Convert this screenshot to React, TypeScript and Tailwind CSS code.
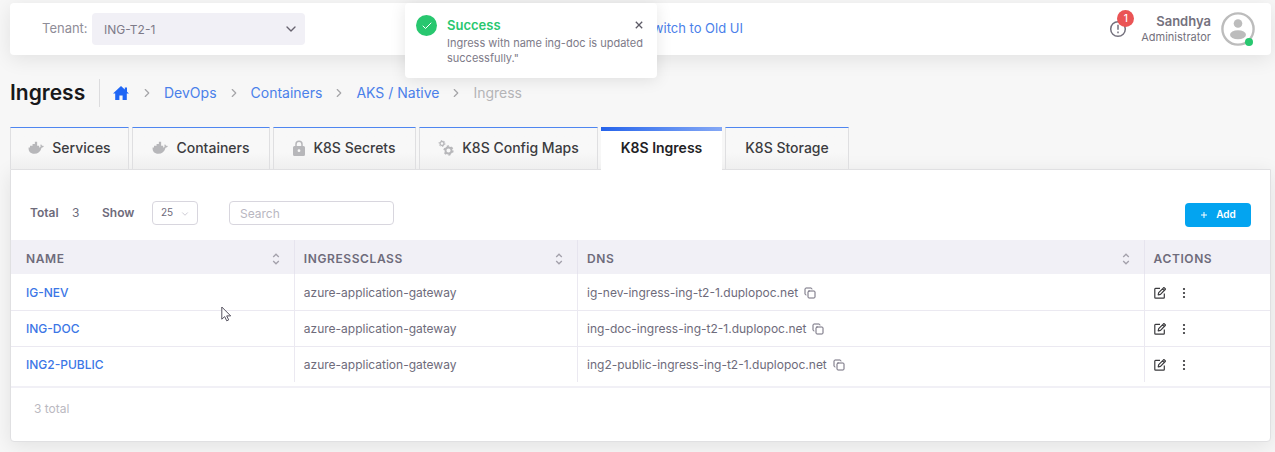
import type { ReactNode } from "react";
import { Check, ChevronDown, ChevronRight, Copy } from "lucide-react";

function Home() {
  return (
    <svg viewBox="0 0 18 16" className="h-4 w-[18px]" fill="#1f66f5" aria-hidden="true">
      <path d="M9 1 1 8.600h2.200V15h4.200v-4.600h3.200V15h4.200V8.600H17l-2-1.900V2.500h-2.200v2.100Z" />
    </svg>
  );
}

function Whale() {
  return (
    <svg viewBox="0 0 28 24" className="h-3.5 w-4 shrink-0 text-[#b7b7ba]" fill="currentColor" aria-hidden="true">
      <path d="M1 11h2.500V8H8V5h4V1h4v7h3.500v3h1c1-.3 1.600-.9 1.600-1.700-.7-1.300-.5-2.800.4-4 1.300.8 2 1.800 2.100 3 1.300-.1 2.300.1 3.100.8-.7 1.600-2.100 2.300-4 2.300C21.800 18.500 17.500 22 11 22 4.500 22 .6 18 1 11Z" />
    </svg>
  );
}

function Lock() {
  return (
    <svg viewBox="0 0 12 16" className="h-4 w-3 shrink-0" aria-hidden="true">
      <path d="M3 7V4.200a3 3 0 0 1 6 0V7" fill="none" stroke="#b7b7ba" strokeWidth="1.500" />
      <path fillRule="evenodd" d="M1.500 6h9A1.500 1.500 0 0 1 12 7.500v7a1.500 1.500 0 0 1-1.500 1.500h-9A1.500 1.500 0 0 1 0 14.500v-7A1.500 1.500 0 0 1 1.500 6ZM6 9.300a1.400 1.400 0 1 0 0 2.800 1.400 1.400 0 0 0 0-2.800Z" fill="#b7b7ba" />
    </svg>
  );
}

function Gears() {
  return (
    <svg viewBox="0 0 16 18" className="h-[18px] w-4 shrink-0" fill="none" stroke="#b7b7ba" aria-hidden="true">
      <circle cx="4" cy="4.500" r="2" strokeWidth="1.300" />
      <circle cx="4" cy="4.500" r="3" strokeWidth="1" strokeDasharray="1.300 1.840" />
      <circle cx="10.500" cy="11.500" r="3" strokeWidth="1.900" />
      <circle cx="10.500" cy="11.500" r="4.400" strokeWidth="1.500" strokeDasharray="2.200 2.407" />
    </svg>
  );
}

function SortArrows() {
  return (
    <svg viewBox="0 0 8 12" className="h-3 w-2" fill="none" stroke="#a3a0ab" strokeWidth="1.300" aria-hidden="true">
      <path d="M1.200 4 4 1.200 6.800 4M1.200 8 4 10.800 6.800 8" />
    </svg>
  );
}

function EditIcon() {
  return (
    <svg viewBox="0 0 12 12" className="h-3 w-3" fill="none" stroke="#3a3a3d" strokeWidth="1.200" strokeLinejoin="round" aria-hidden="true">
      <path d="M6 1.400H1.500a.7.7 0 0 0-.7.7v8.400c0 .4.300.7.700.7h8.100c.4 0 .7-.3.700-.7V6.500" />
      <path d="m4.200 7.900.5-2.300L9.500.8a.6.6 0 0 1 .8 0l.9.9a.6.6 0 0 1 0 .8L6.500 7.300ZM8.500 1.900l1.600 1.600" />
    </svg>
  );
}

const tabs: { label: string; width: string; icon?: ReactNode }[] = [
  { label: "Services", width: "w-[119px]", icon: <Whale /> },
  { label: "Containers", width: "w-[138px]", icon: <Whale /> },
  { label: "K8S Secrets", width: "w-[143px]", icon: <Lock /> },
  { label: "K8S Config Maps", width: "w-[179px]", icon: <Gears /> },
  { label: "K8S Ingress", width: "w-[121px]" },
  { label: "K8S Storage", width: "w-[124px]" },
];

const rows = [
  { name: "IG-NEV", dns: "ig-nev-ingress-ing-t2-1.duplopoc.net" },
  { name: "ING-DOC", dns: "ing-doc-ingress-ing-t2-1.duplopoc.net" },
  { name: "ING2-PUBLIC", dns: "ing2-public-ingress-ing-t2-1.duplopoc.net" },
];

const columns = [
  { label: "NAME", width: "w-[22.5%]", pad: "pl-[15px]", sortable: true },
  { label: "INGRESSCLASS", width: "w-[22.5%]", pad: "pl-[9px]", sortable: true },
  { label: "DNS", width: "w-[45%]", pad: "pl-[9px]", sortable: true },
  { label: "ACTIONS", width: "w-[10%]", pad: "pl-[9px]", sortable: false },
];

function Header() {
  return (
    <header className="flex h-[52px] items-center rounded bg-white shadow-[0_4px_20px_rgba(0,0,0,0.09)]">
      <div className="flex w-1/2 items-center pl-8">
        <label htmlFor="tenant" className="w-[50px] text-[13px] text-[#8f8d98]">Tenant:</label>
        <div className="relative">
          <select id="tenant" className="h-8 w-[213px] appearance-none rounded bg-[#f1f0f6] pt-0.5 pl-3 text-xs text-[#7d7a88]">
            <option>ING-T2-1</option>
          </select>
          <ChevronDown className="pointer-events-none absolute top-2 right-1.5 size-4 text-[#67636f]" />
        </div>
      </div>
      <a href="#old-ui" className="pl-1 text-[13px] text-[#4a80ea]">Switch to Old UI</a>
      <div className="ml-auto flex items-center pr-4">
        <button aria-label="Notifications" className="relative mr-3.5">
          <svg viewBox="0 0 18 18" className="size-[18px]" fill="none" stroke="#74717d" strokeWidth="1.500">
            <circle cx="9" cy="9" r="7.300" />
            <path d="M9 4.800v5M9 11.600v1.600" />
          </svg>
          <span className="absolute -top-2.5 left-2 flex size-[17px] items-center justify-center rounded-full bg-[#ea5455] text-[10px] font-medium text-white">1</span>
        </button>
        <div className="mr-2.5 text-right text-[#74717d]">
          <div className="text-[13px] leading-4 font-semibold">Sandhya</div>
          <div className="text-[11px] leading-4">Administrator</div>
        </div>
        <div className="relative">
          <svg viewBox="0 0 34 34" className="size-[34px]" fill="#bcbcbc" role="img" aria-label="Sandhya">
            <circle cx="17" cy="17" r="15.600" fill="none" stroke="#bcbcbc" strokeWidth="2.400" />
            <circle cx="17" cy="11.500" r="4.300" />
            <ellipse cx="17" cy="22.800" rx="8" ry="4.500" />
          </svg>
          <span className="absolute right-0.5 bottom-0 size-2 rounded-full bg-[#28c76f]" />
        </div>
      </div>
    </header>
  );
}

function Toast() {
  return (
    <div role="status" className="absolute top-[3px] left-[405px] z-10 flex h-[75px] w-[252px] rounded bg-white pt-3 pl-[11px] shadow-[0_2px_16px_rgba(0,0,0,0.1)]">
      <span className="flex size-[21px] shrink-0 items-center justify-center rounded-full bg-[#28c76f]">
        <Check className="size-3 text-white" strokeWidth={2} />
      </span>
      <div className="ml-2.5">
        <div className="text-[13px] leading-5 font-semibold text-[#28c76f]">Success</div>
        <p className="mt-px w-[200px] text-[11px] leading-[15px] text-[#7d7a88]">Ingress with name ing-doc is updated successfully."</p>
      </div>
      <button aria-label="Close" className="absolute top-[18px] right-3.5">
        <svg viewBox="0 0 8 8" className="size-2" stroke="#5d5b66" strokeWidth="1.300"><path d="m.8.8 6.400 6.400M7.200.8.8 7.200" /></svg>
      </button>
    </div>
  );
}

function Breadcrumb() {
  const link = "text-sm text-[#4a80ea]";
  const sep = <ChevronRight className="size-3.5 text-[#a5a5a8]" strokeWidth={2} />;
  return (
    <div className="mt-6 flex h-7 items-center">
      <h1 className="w-[90px] border-r border-[#dcdcde] text-[21px] leading-7 font-semibold text-[#18181b]">Ingress</h1>
      <nav aria-label="Breadcrumb" className="flex items-center gap-2.5 pl-3">
        <a href="#home" aria-label="Home"><Home /></a>
        {sep}
        <a href="#devops" className={link}>DevOps</a>
        {sep}
        <a href="#containers" className={link}>Containers</a>
        {sep}
        <a href="#aks" className={link}>AKS / Native</a>
        {sep}
        <span className="text-sm text-[#b5b5b8]">Ingress</span>
      </nav>
    </div>
  );
}

export default function App() {
  return (
    <div className="relative min-h-screen bg-[#f7f7f7] pt-[3px] pr-1 pb-2.5 pl-2.5 font-['Inter',sans-serif]">
      <Header />
      <Toast />
      <Breadcrumb />

      <div role="tablist" className="mt-5 flex gap-[3px]">
        {tabs.map((tab) => {
          const active = tab.label === "K8S Ingress";
          return (
            <button
              key={tab.label}
              role="tab"
              aria-selected={active}
              className={`flex shrink-0 flex-col text-sm ${tab.width} ${
                active
                  ? "relative z-10 -mb-px h-[43px] bg-white pb-1.5 font-semibold text-[#222225]"
                  : "h-[42px] border-x border-t border-x-[#dfdfe1] border-t-[#4f86f0] bg-linear-to-b from-[#f8f8f8] from-60% to-[#efefef] pb-0.5 font-medium text-[#3c3c40]"
              }`}
            >
              {active && <span className="h-1 w-full shrink-0 bg-linear-to-r from-[#2563eb] to-[#85a8f5]" />}
              <span className="flex w-full flex-1 items-center justify-center gap-2 whitespace-nowrap">
                {tab.icon}
                {tab.label}
              </span>
            </button>
          );
        })}
      </div>

      <main className="rounded-b border border-[#e0e0e2] bg-white pb-[22px] shadow-[0_4px_20px_rgba(0,0,0,0.09)]">
        <div className="flex h-[70px] items-center px-[19px] pt-4 text-xs text-[#6e6b7b]">
          <span className="w-[42px] font-semibold">Total</span>
          <span className="w-[30px]">3</span>
          <label htmlFor="page-size" className="w-[50px] font-semibold">Show</label>
          <div className="relative mr-[31px]">
            <select id="page-size" className="h-6 w-[46px] appearance-none rounded border border-[#d8d6de] bg-white pl-2 text-[10px]">
              <option>25</option>
            </select>
            <ChevronDown className="pointer-events-none absolute top-2 right-2 size-2.5 text-[#c4c2cc]" />
          </div>
          <input aria-label="Search" placeholder="Search" className="h-6 w-[165px] rounded border border-[#d8d6de] px-2.5 text-xs placeholder:text-[#b9b7c1]" />
          <button className="mt-1 ml-auto flex h-6 w-[66px] items-center justify-center gap-2 rounded bg-[#03a4f0] text-[10px] font-semibold text-white">
            <svg viewBox="0 0 8 8" className="size-2" stroke="currentColor" strokeWidth="1"><path d="M4 1v6M1 4h6" /></svg>
            Add
          </button>
        </div>

        <div className="border-b-2 border-[#f1f0f6] pb-1">
          <table className="w-full table-fixed border-collapse text-left">
            <thead>
              <tr className="h-[34px] bg-[#f1f0f6]">
                {columns.map((column) => (
                  <th key={column.label} scope="col" className={`border-r border-[#e6e4ee] pt-1 pr-3.5 text-xs font-semibold tracking-wider text-[#6e6b7b] last:border-r-0 ${column.width} ${column.pad}`}>
                    <span className="flex items-center justify-between">
                      {column.label}
                      {column.sortable && <button aria-label={`Sort by ${column.label}`}><SortArrows /></button>}
                    </span>
                  </th>
                ))}
              </tr>
            </thead>
            <tbody className="text-xs text-[#6e6b7b]">
              {rows.map((row) => (
                <tr key={row.name} className="h-9 border-b border-[#ebe9f1] last:border-b-0">
                  <td className="border-r border-[#ebe9f1] pt-0.5 pl-[15px]"><a href={`#${row.name}`} className="font-medium text-[#3b76e6]">{row.name}</a></td>
                  <td className="border-r border-[#ebe9f1] pt-0.5 pl-[9px]">azure-application-gateway</td>
                  <td className="border-r border-[#ebe9f1] pt-0.5 pl-[9px]">
                    <span className="flex items-center gap-1.5">
                      {row.dns}
                      <button aria-label={`Copy ${row.dns}`}><Copy className="size-3" strokeWidth={2} /></button>
                    </span>
                  </td>
                  <td className="pt-0.5 pl-[9px]">
                    <span className="flex items-center gap-4">
                      <button aria-label={`Edit ${row.name}`}><EditIcon /></button>
                      <button aria-label={`More actions for ${row.name}`}>
                        <svg viewBox="0 0 4 12" className="h-3 w-1" fill="#303033"><circle cx="2" cy="2" r="1.100" /><circle cx="2" cy="6" r="1.100" /><circle cx="2" cy="10" r="1.100" /></svg>
                      </button>
                    </span>
                  </td>
                </tr>
              ))}
            </tbody>
          </table>
        </div>
        <p className="pt-[11px] pl-[23px] text-xs leading-5 text-[#bbb9c1]">3 total</p>
      </main>

      <svg viewBox="0 0 11 16" className="pointer-events-none absolute top-[306px] left-[221px] h-4 w-[11px]" fill="white" stroke="#55525f" strokeWidth="1" aria-hidden="true">
        <path d="M.8 1v12.200l2.900-2.600 2 4.200 2-.9-2-4h4z" />
      </svg>
    </div>
  );
}
